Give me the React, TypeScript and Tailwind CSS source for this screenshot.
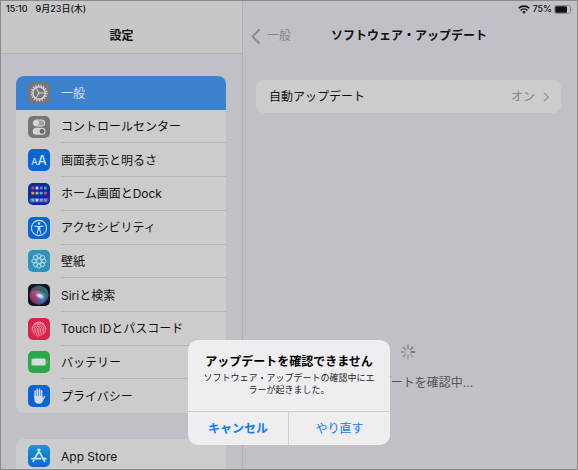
import type { ReactNode } from 'react'

const GearIcon = () => (
    <svg viewBox="0 0 22 22" className="size-full" fill="none" stroke="#d4d4d4">
        <circle cx="11" cy="11" r="7.7" strokeWidth="1.6" strokeDasharray="1.35 1.338" />
        <circle cx="11" cy="11" r="6.2" strokeWidth="1.5" />
        <path d="M11 11h5.6M11 11 8.200 6.200M11 11l-2.800 4.800" strokeWidth="1" />
        <circle cx="11" cy="11" r="1" fill="#76767a" strokeWidth="0.9" />
    </svg>
)

const TogglesIcon = () => (
    <svg viewBox="0 0 22 22" className="size-full">
        <rect x="5.2" y="4" width="11.8" height="6" rx="3" fill="#a2a2a5" stroke="#d4d4d4" strokeWidth="1" />
        <circle cx="8.2" cy="7" r="2.8" fill="#d4d4d4" />
        <circle cx="8.2" cy="7" r="1.8" fill="#dadada" />
        <rect x="4.7" y="11.8" width="12.8" height="7" rx="3.5" fill="#d4d4d4" />
        <circle cx="14" cy="15.3" r="2.4" fill="#67676b" />
    </svg>
)

const DisplayIcon = () => (
    <span className="flex size-full items-baseline justify-center pt-[5px] leading-none font-medium text-[#dbe3ee]">
        <span className="text-[9px]">A</span>
        <span className="text-[13px]">A</span>
    </span>
)

const appColors = [
    ['#d8483f', '#c9cfdf', '#a05fd6', '#42b45c'],
    ['#d2a62c', '#d7b04d', '#35b4e6', '#df4450'],
    ['#66d25e', '#c7d0e8', '#4bb5ee', '#df7a35'],
]

const HomeIcon = () => (
    <svg viewBox="0 0 22 22" className="size-full">
        <rect x="1.5" y="14.9" width="19" height="4.6" rx="1.5" fill="#3a52b8" />
        {appColors.map((row, y) =>
            row.map((color, x) => (
                <rect
                    key={`${x}-${y}`}
                    x={3.4 + x * 4.2}
                    y={y === 2 ? 15.8 : 3.6 + y * 5.1}
                    width="2.8"
                    height="2.8"
                    rx="0.5"
                    fill={color}
                />
            ))
        )}
    </svg>
)

const AccessibilityIcon = () => (
    <svg viewBox="0 0 22 22" className="size-full">
        <circle cx="11" cy="11" r="7.6" fill="none" stroke="#d3dcea" strokeWidth="1.1" />
        <circle cx="11" cy="6.6" r="1.3" fill="#d3dcea" />
        <path
            d="M6.800 9l3.400.6h1.600l3.400-.6M10.400 9.700v2.500l-1.200 3.900M11.600 9.700v2.500l1.200 3.900"
            fill="none"
            stroke="#d3dcea"
            strokeWidth="1.1"
            strokeLinecap="round"
            strokeLinejoin="round"
        />
        <path d="M9.900 9.400h2.200v3H9.900z" fill="#d3dcea" />
    </svg>
)

const petals = [0, 45, 90, 135, 180, 225, 270, 315]

const WallpaperIcon = () => (
    <svg viewBox="0 0 22 22" className="size-full" fill="none" stroke="#c9dfe8" strokeWidth="0.9">
        <circle cx="11" cy="11" r="2.4" />
        {petals.map((angle) => (
            <circle key={angle} cx="11" cy="6" r="2.1" transform={`rotate(${angle} 11 11)`} />
        ))}
    </svg>
)

const SiriIcon = () => (
    <svg viewBox="0 0 22 22" className="size-full">
        <defs>
            <linearGradient id="siriRing" x1="1" y1="0" x2="0" y2="1">
                <stop offset="0" stopColor="#1f8f86" />
                <stop offset="0.45" stopColor="#35505f" />
                <stop offset="1" stopColor="#a52560" />
            </linearGradient>
            <radialGradient id="siriPink" cx="0.25" cy="0.45" r="0.5">
                <stop offset="0" stopColor="#c93b6b" />
                <stop offset="1" stopColor="#c93b6b" stopOpacity="0" />
            </radialGradient>
            <radialGradient id="siriBlue" cx="0.7" cy="0.75" r="0.45">
                <stop offset="0" stopColor="#3f7ad8" />
                <stop offset="1" stopColor="#3f7ad8" stopOpacity="0" />
            </radialGradient>
            <radialGradient id="siriGlow">
                <stop offset="0" stopColor="#f4f6fa" />
                <stop offset="0.4" stopColor="#cfe2ec" stopOpacity="0.8" />
                <stop offset="1" stopColor="#7fc6d8" stopOpacity="0" />
            </radialGradient>
        </defs>
        <circle cx="11" cy="11" r="9.6" fill="url(#siriRing)" />
        <circle cx="11" cy="11" r="8.6" fill="url(#siriPink)" />
        <circle cx="11" cy="11" r="8.6" fill="url(#siriBlue)" />
        <path d="M4 8.600C7 6.500 13 6.800 18.500 11.500" fill="none" stroke="#4fb7a4" strokeWidth="1" opacity="0.6" />
        <ellipse cx="12" cy="11.8" rx="6" ry="3.6" fill="url(#siriGlow)" transform="rotate(25 12 11.8)" />
    </svg>
)

const FingerprintIcon = () => (
    <svg viewBox="0 0 22 22" className="size-full" fill="none" stroke="#f0a5b3" strokeWidth="0.8" strokeLinecap="round">
        <path d="M6.300 5.700a7 7 0 0 1 9.400 0" />
        <path d="M4.100 10.200a7 7 0 0 1 13.800 0M4.100 12.800c.5-.8.500-1.500.6-2.200a6.300 5.600 0 0 1 12.600.4c.1 1.300 0 2.600-.3 3.800" />
        <path d="M5 14.900c1-1.300 1.200-2.600 1.200-4a4.800 4.300 0 0 1 9.600 0c.1 2-.1 3.900-.8 5.700" />
        <path d="M6.200 16.400c1.200-1.600 1.600-3.400 1.600-5.300a3.200 2.900 0 0 1 6.400 0c.1 2.500-.3 4.700-1.300 6.700" />
        <path d="M7.900 17.500c1.100-1.900 1.600-4 1.600-6.300a1.500 1.500 0 0 1 3 0c.1 2.600-.5 4.900-1.700 7M11 11.400c0 2.400-.5 4.600-1.500 6.700" />
    </svg>
)

const BatteryIcon = () => (
    <svg viewBox="0 0 22 22" className="size-full">
        <rect x="3" y="7" width="15.2" height="8" rx="2" fill="#7cc48c" />
        <rect x="4" y="8" width="13.2" height="6" rx="1.2" fill="#d6dcd8" />
        <path d="M19 9.600c1 .4 1 2.400 0 2.800z" fill="#7cc48c" />
    </svg>
)

const HandIcon = () => (
    <svg viewBox="0 0 22 22" className="size-full" stroke="#d3dcea" strokeLinecap="round" fill="none">
        <path d="M7.100 6v6M9.300 4.400v7M11.500 4.300v7M13.600 5.800v6" strokeWidth="1.6" />
        <path
            d="M6.300 11h8.100v2.200l1.600-1.900c.7-.6 1.500 0 1.100.8l-2.600 4.600c-.8 1.400-2 2-3.700 2-2.900 0-4.500-1.800-4.500-4.500z"
            fill="#d3dcea"
            stroke="none"
        />
    </svg>
)

const AppStoreIcon = () => (
    <svg viewBox="0 0 22 22" className="size-full" fill="none" stroke="#d6e2ec" strokeWidth="1.7" strokeLinecap="round">
        <path d="M11.900 4.500 6.700 13.500M10 4.500l6.600 11.800M4 13.700h8.600M15.800 13.700H18M5.800 15.400l-.6 1" />
    </svg>
)

const WifiIcon = () => (
    <svg viewBox="0 0 12 9" className="h-[9px] w-3" fill="none" stroke="#111" strokeWidth="1.6">
        <path d="M.7 3.300a7.600 7.600 0 0 1 10.600 0M2.600 5.300a4.900 4.900 0 0 1 6.800 0" />
        <path d="M6 8.700 4.200 6.900a2.600 2.600 0 0 1 3.600 0z" fill="#111" stroke="none" />
    </svg>
)

const StatusBattery = () => (
    <svg viewBox="0 0 19 9" className="h-[9px] w-[19px]">
        <rect x="0.5" y="0.5" width="16" height="8" rx="2" fill="none" stroke="#8d8d91" />
        <rect x="1.300" y="1.300" width="11.700" height="6.400" rx="1" fill="#111" />
        <path d="M17.600 3c1 .4 1 2.600 0 3z" fill="#8d8d91" />
    </svg>
)

const Spinner = () => (
    <svg viewBox="0 0 16 16" className="size-4" stroke="#5e5e63" strokeWidth="1.3" strokeLinecap="round">
        {petals.map((angle, i) => (
            <path
                key={angle}
                d="M8 4.700V1.200"
                transform={`rotate(${angle + 90} 8 8)`}
                opacity={i === 0 ? 1 : 0.3 + i * 0.06}
            />
        ))}
    </svg>
)

type Item = {
    label: string
    icon: ReactNode
    tile: string
    selected?: boolean
}

const mainItems: Item[] = [
    { label: '一般', icon: <GearIcon />, tile: 'bg-[#76767a]', selected: true },
    { label: 'コントロールセンター', icon: <TogglesIcon />, tile: 'bg-[#76767a]' },
    { label: '画面表示と明るさ', icon: <DisplayIcon />, tile: 'bg-[#0765d8]' },
    { label: 'ホーム画面とDock', icon: <HomeIcon />, tile: 'bg-[#0b2aa8]' },
    { label: 'アクセシビリティ', icon: <AccessibilityIcon />, tile: 'bg-[#0765d8]' },
    { label: '壁紙', icon: <WallpaperIcon />, tile: 'bg-[#2d93bd]' },
    { label: 'Siriと検索', icon: <SiriIcon />, tile: 'bg-[#14132a]' },
    { label: 'Touch IDとパスコード', icon: <FingerprintIcon />, tile: 'bg-[#d8234c]' },
    { label: 'バッテリー', icon: <BatteryIcon />, tile: 'bg-[#2ba84a]' },
    { label: 'プライバシー', icon: <HandIcon />, tile: 'bg-[#0765d8]' },
]

const SettingsRow = ({ item, last }: { item: Item; last: boolean }) => (
    <li className={item.selected ? 'flex bg-[#3d82cd] text-[#d3dfee]' : 'flex'}>
        <a href="#" className="flex min-w-0 flex-1 items-center pl-3">
            <span className={`flex size-[22px] shrink-0 items-center justify-center overflow-hidden rounded-[5px] ${item.tile}`}>
                {item.icon}
            </span>
            <span
                className={`ml-[11px] flex flex-1 items-center self-stretch pt-0.5 whitespace-nowrap ${
                    last || item.selected ? '' : 'border-b border-[#b5b5b8]'
                }`}
            >
                {item.label}
            </span>
        </a>
    </li>
)

const Sidebar = () => (
    <aside className="flex w-[42%] shrink-0 flex-col border-r border-[#b0b0b5]">
        <header className="h-[53px] shrink-0 border-b border-[#b0b0b5] bg-[#c7c7c8]">
            <div className="flex h-4 items-center gap-2 pl-[5px] text-[9px] font-medium">
                <span>15:10</span>
                <span>9月23日(木)</span>
            </div>
            <h1 className="mt-[9px] text-center text-[12px] leading-5 font-bold">設定</h1>
        </header>
        <nav className="pt-[22px] pr-4 pl-[15px]">
            <ul className="grid h-[337px] auto-rows-fr overflow-hidden rounded-lg bg-[#cccccc]">
                {mainItems.map((item, i) => (
                    <SettingsRow key={item.label} item={item} last={i === mainItems.length - 1} />
                ))}
            </ul>
            <ul className="mt-[26px] grid h-[34px] overflow-hidden rounded-t-lg bg-[#cccccc]">
                <SettingsRow
                    item={{
                        label: 'App Store',
                        icon: <AppStoreIcon />,
                        tile: 'bg-linear-to-b from-[#159bcf] to-[#1465d0]',
                    }}
                    last
                />
            </ul>
        </nav>
    </aside>
)

const UpdatePanel = () => (
    <main className="flex min-w-0 flex-1 flex-col">
        <div className="flex h-4 items-center justify-end gap-[2px] pr-1 text-[9px] font-medium">
            <WifiIcon />
            <span>75%</span>
            <StatusBattery />
        </div>
        <div className="mt-[9px] grid h-5 grid-cols-[80px_1fr_80px] items-center pr-0.5">
            <a href="#" className="flex items-center gap-[7px] pl-2 text-[#87878b]">
                <svg viewBox="0 0 9 15" className="h-[15px] w-[9px]" fill="none" stroke="currentColor" strokeWidth="1.800" strokeLinecap="round">
                    <path d="M8 1 1.500 7.500 8 14" />
                </svg>
                一般
            </a>
            <h2 className="text-center font-bold whitespace-nowrap">ソフトウェア・アップデート</h2>
        </div>
        <a href="#" className="mt-[34px] mr-4 ml-[13px] flex h-[33px] items-center rounded-lg bg-[#cccccc] pr-3 pl-[13px]">
            <span className="flex-1 pt-px">自動アップデート</span>
            <span className="text-[#87878b]">オン</span>
            <svg viewBox="0 0 6 10" className="ml-2 h-[10px] w-[6px]" fill="none" stroke="#98989c" strokeWidth="1.300">
                <path d="M.8.8 5.200 5 .8 9.200" />
            </svg>
        </a>
        <div className="mt-[231px] flex flex-col items-center gap-[13px] pr-1 text-[#545458]" role="status">
            <Spinner />
            <p className="leading-5">アップデートを確認中...</p>
        </div>
    </main>
)

const UpdateAlert = () => (
    <div className="absolute inset-0 flex items-end justify-center pb-6">
        <div
            role="alertdialog"
            aria-labelledby="alert-title"
            aria-describedby="alert-text"
            className="w-[202px] overflow-hidden rounded-[10px] bg-[#eeeef0]"
        >
            <div className="px-3 pt-3 pb-[15px] text-center">
                <h3 id="alert-title" className="text-[12px] leading-5 font-bold whitespace-nowrap text-black">
                    アップデートを確認できません
                </h3>
                <p id="alert-text" className="text-[9px] leading-3 text-[#222]">
                    ソフトウェア・アップデートの確認中にエラーが起きました。
                </p>
            </div>
            <div className="grid h-[34px] grid-cols-2 divide-x divide-[#cfcfd3] border-t border-[#cfcfd3] text-[#0a7cff]">
                <button type="button" className="font-bold">
                    キャンセル
                </button>
                <button type="button">やり直す</button>
            </div>
        </div>
    </div>
)

export default function App() {
    return (
        <div
            lang="ja"
            className="relative flex h-screen overflow-hidden border border-[#8a8a8d] bg-[#c1c0c6] font-['Inter','Noto_Sans_CJK_JP',sans-serif] text-[12px] text-[#111]"
        >
            <Sidebar />
            <UpdatePanel />
            <UpdateAlert />
        </div>
    )
}
